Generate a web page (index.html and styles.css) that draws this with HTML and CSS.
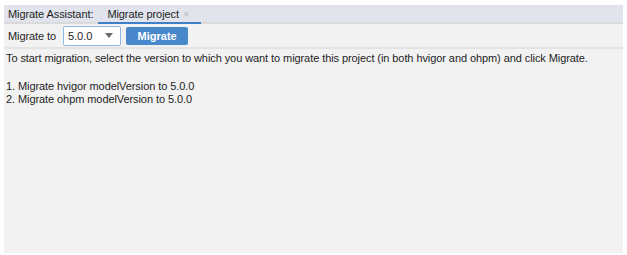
FILE: index.html
```html
<!DOCTYPE html>
<html>
<head>
<meta charset="utf-8">
<link rel="stylesheet" href="styles.css">
</head>
<body>
<div class="frame">
  <div class="tabs">
    <span class="tabs-label">Migrate Assistant:</span>
    <span class="tab active">Migrate project <span class="close">×</span></span>
  </div>
  <div class="toolbar">
    <span class="tb-label">Migrate to</span>
    <div class="select">
      <span class="select-val">5.0.0</span>
      <svg class="caret" width="8" height="5" viewBox="0 0 8 5"><path d="M0 0 L8 0 L4 5 Z" fill="#6b6b6b"/></svg>
    </div>
    <button class="btn">Migrate</button>
  </div>
  <div class="content">
    <p class="intro">To start migration, select the version to which you want to migrate this project (in both hvigor and ohpm) and click Migrate.</p>
    <p class="step">1. Migrate hvigor modelVersion to 5.0.0</p>
    <p class="step">2. Migrate ohpm modelVersion to 5.0.0</p>
  </div>
</div>
</body>
</html>
```

FILE: styles.css
```css
* { box-sizing: border-box; }
html, body { margin: 0; padding: 0; background: #fff; }
body {
  width: 627px; height: 255px;
  padding: 5px 4px 2px 4px;
  font-family: "Liberation Sans", Arial, sans-serif;
  font-size: 11px;
  letter-spacing: -0.08px;
  color: #1e1e1e;
}
.frame {
  height: 100%;
  background: #f2f2f2;
  display: flex; flex-direction: column;
}
.tabs {
  height: 19px;
  background: #e1e4ec;
  border-bottom: 2px solid #dadada;
  display: flex; align-items: stretch;
  padding-left: 4px;
}
.tabs-label { display: flex; align-items: center; padding-right: 5px; }
.tab {
  display: flex; align-items: center;
  padding: 0 12px 0 9px;
  border-bottom: 2px solid #3d7fc8;
  margin-bottom: -2px;
}
.close { color: #b9bcc4; margin-left: 4px; font-size: 11px; }
.toolbar {
  height: 25px;
  display: flex; align-items: center;
  padding-left: 4px;
  border-bottom: 2px solid #e3e3e3;
}
.tb-label { margin-right: 7px; }
.select {
  width: 58px; height: 20px;
  background: #fff;
  border: 1px solid #8fb8e6;
  border-radius: 2px;
  display: flex; align-items: center; justify-content: space-between;
  padding: 0 7px 0 4px;
}
.caret { display: block; }
.btn {
  margin-left: 5px;
  width: 62px; height: 18px;
  background: #4a88cc;
  border: none; border-radius: 2px;
  color: #fff;
  font-family: inherit; font-size: 11px; font-weight: bold;
  padding: 0;
}
.content { padding: 3px 2px; }
.content p { margin: 0; line-height: 13px; white-space: nowrap; }
.intro { margin-bottom: 15px !important; }
```
